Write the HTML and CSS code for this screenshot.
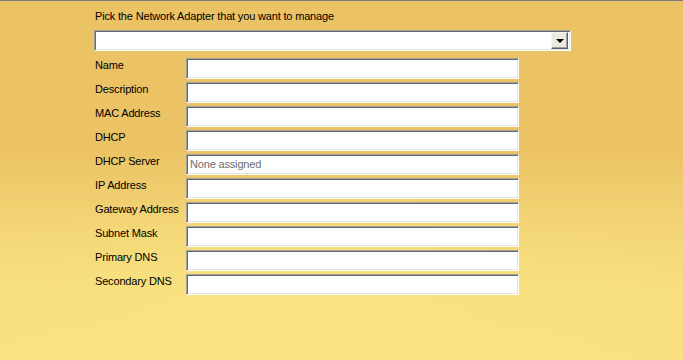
FILE: index.html
```html
<!DOCTYPE html>
<html lang="en">
<head>
    <meta charset="UTF-8">
    <title>Network Adapter</title>
    <link rel="stylesheet" href="styles.css">
</head>
<body>
    <div class="panel">
        <div class="title">Pick the Network Adapter that you want to manage</div>
        <div class="select">
            <span class="drop-button"><span class="arrow"></span></span>
        </div>

        <div class="fields">
            <label>Name</label>
            <div class="textbox"></div>

            <label>Description</label>
            <div class="textbox"></div>

            <label>MAC Address</label>
            <div class="textbox"></div>

            <label>DHCP</label>
            <div class="textbox"></div>

            <label>DHCP Server</label>
            <div class="textbox placeholder">None assigned</div>

            <label>IP Address</label>
            <div class="textbox"></div>

            <label>Gateway Address</label>
            <div class="textbox"></div>

            <label>Subnet Mask</label>
            <div class="textbox"></div>

            <label>Primary DNS</label>
            <div class="textbox"></div>

            <label>Secondary DNS</label>
            <div class="textbox"></div>
        </div>
    </div>
</body>
</html>
```

FILE: styles.css
```css
html, body {
    height: 100%;
}
body {
    margin: 0;
    font-family: "Liberation Sans", Arial, sans-serif;
    font-size: 11px;
    letter-spacing: -0.17px;
    color: #000;
    box-sizing: border-box;
    border-top: 1px solid #7e7e7e;
    background:
        radial-gradient(ellipse 420px 140px at 300px 330px, rgba(250, 228, 130, 0.6), rgba(250, 228, 130, 0) 100%),
        linear-gradient(180deg, #ebc365 0%, #ebc365 42%, #f3d474 62%, #f8df7e 80%, #f9e17f 100%);
}
.panel {
    padding: 9px 0 0 94px;
}
.title {
    line-height: 13px;
    padding-left: 1px;
    margin-bottom: 7px;
}
.select,
.textbox {
    box-sizing: border-box;
    background-color: #fff;
    border: 1px solid;
    border-color: #a0a0a0 #fff #fff #a0a0a0;
    box-shadow: inset 1px 1px 0 #696969, inset -1px -1px 0 #e3e3e3;
}
.select {
    width: 477px;
    height: 21px;
    display: flex;
    justify-content: flex-end;
    align-items: center;
    padding-right: 2px;
}
.drop-button {
    box-sizing: border-box;
    width: 17px;
    height: 17px;
    background-color: #ece9e2;
    border: 1px solid;
    border-color: #f4f4f4 #5f5f5f #5f5f5f #f4f4f4;
    box-shadow: inset -1px -1px 0 #a0a0a0;
    display: flex;
    align-items: center;
    justify-content: center;
}
.arrow {
    width: 0;
    height: 0;
    border-left: 4px solid transparent;
    border-right: 4px solid transparent;
    border-top: 4px solid #000;
    margin-top: 1px;
}
.fields {
    display: grid;
    grid-template-columns: 92px 333px;
    grid-auto-rows: 21px;
    row-gap: 3px;
    margin-top: 7px;
}
.fields label {
    padding: 1px 0 0 1px;
    line-height: 13px;
    white-space: nowrap;
}
.textbox {
    padding: 3px 0 0 3px;
    line-height: 13px;
}
.placeholder {
    color: #6d6d6d;
}
```
